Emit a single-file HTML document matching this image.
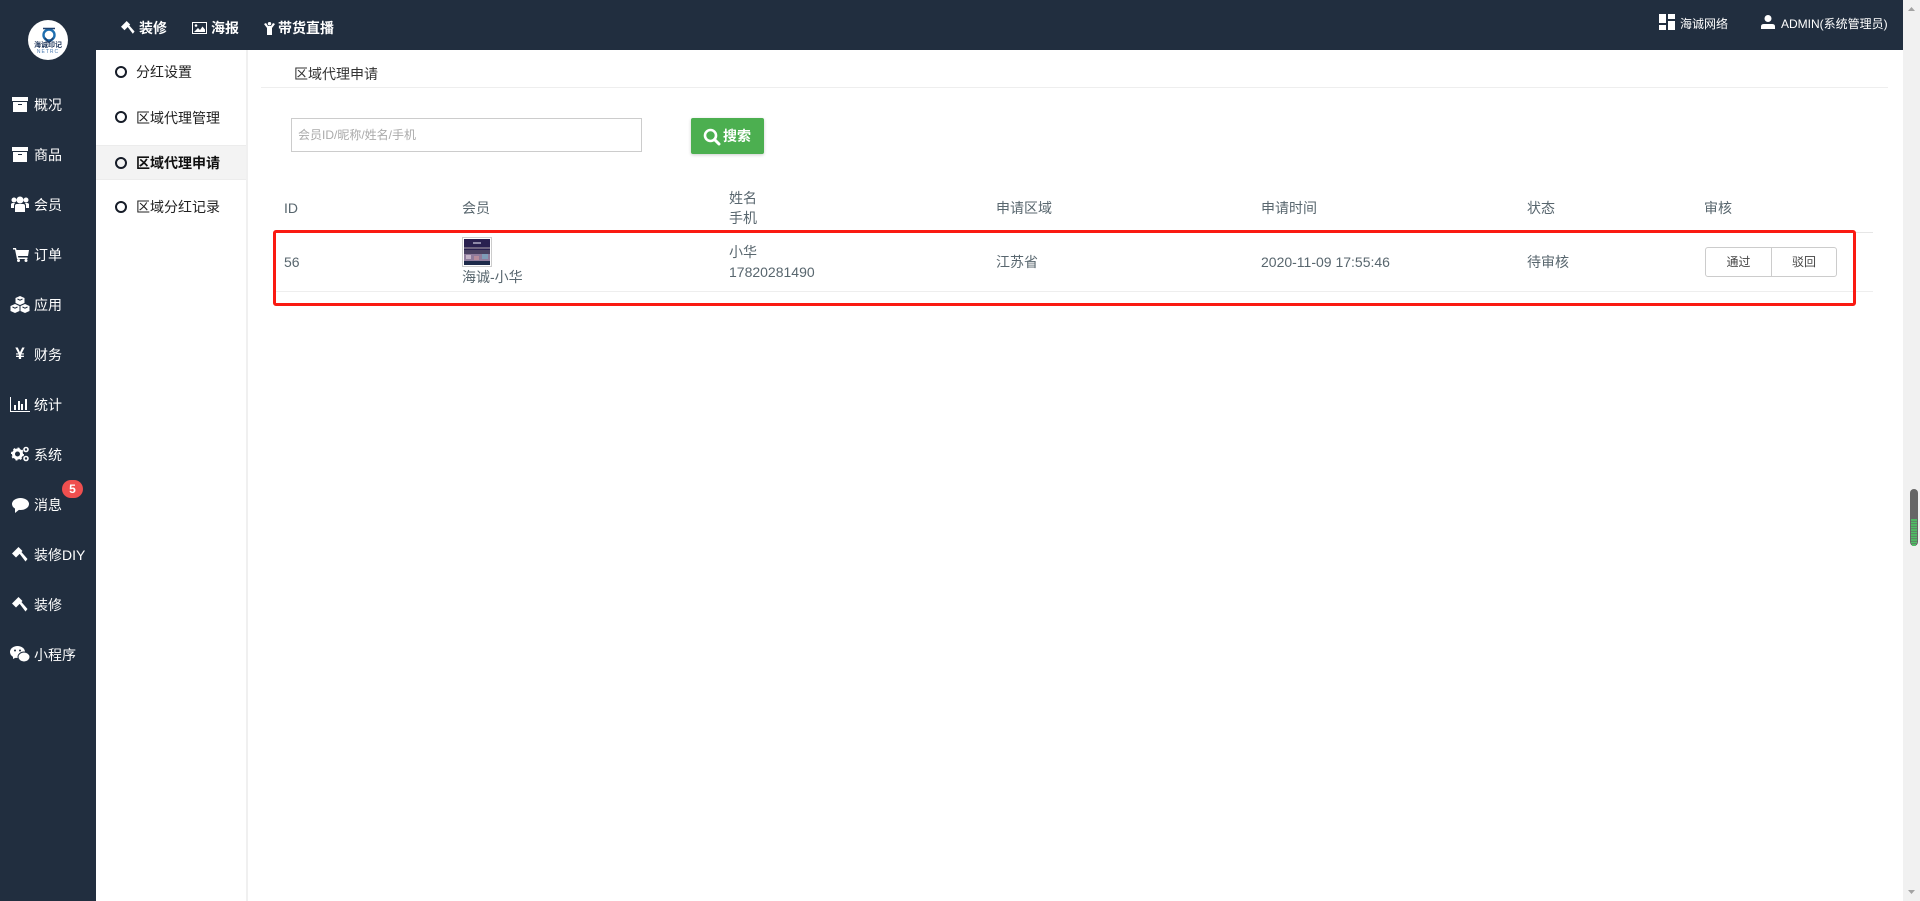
<!DOCTYPE html>
<html lang="zh-CN"><head><meta charset="utf-8"><title>区域代理申请</title>
<style>
*{box-sizing:border-box}
html,body{margin:0;padding:0;width:1920px;height:901px;overflow:hidden;background:#fff;font-family:"Liberation Sans","Noto Sans CJK SC",sans-serif;font-size:14px}
.a{position:absolute;white-space:nowrap;line-height:20px}
svg{position:absolute;display:block}
.s{color:#fff;left:34px;font-size:14px}
.t{color:#fff;font-weight:700;font-size:14px}
.n{color:#222;font-size:14px}
.c{position:absolute;left:115px;width:12px;height:12px;border:2px solid #161c28;border-radius:50%}
.h,.d{color:#58666e;font-size:14px}
</style></head><body>
<div class="a" style="left:0;top:0;width:96px;height:901px;background:#212e3f"></div>
<div class="a" style="left:96px;top:0;width:1807px;height:50px;background:#212e3f"></div>
<div class="a" style="left:246px;top:50px;width:2px;height:851px;background:#f0f0f0"></div>

<!-- logo -->
<div class="a" style="left:28px;top:20px;width:40px;height:40px;border-radius:50%;background:#fff"></div>
<svg style="left:41px;top:27px" width="16" height="16" viewBox="0 0 16 16"><circle cx="8" cy="8" r="5.500" fill="none" stroke="#1f6fb0" stroke-width="2.400"/><path d="M2 1.500H14M8 15.500L4 11M8 15.500L12 11" stroke="#1f3f6b" stroke-width="1.600" fill="none"/></svg>
<div class="a" style="left:33px;top:42px;width:30px;font-size:7px;line-height:8px;color:#22395e;font-weight:700;text-align:center">海诚印记</div>
<div class="a" style="left:33px;top:50px;width:30px;font-size:5px;line-height:5px;color:#4a7ab0;text-align:center;letter-spacing:1px">NETRC</div>

<!-- sidebar icons -->
<svg style="left:12px;top:97px" width="16" height="15" viewBox="0 0 16 15"><path d="M0 0H16V4H0ZM1 5H15V15H1ZM6 7V8H10V7Z" fill="#fff" fill-rule="evenodd"/></svg>
<svg style="left:12px;top:147px" width="16" height="15" viewBox="0 0 16 15"><path d="M0 0H16V4H0ZM1 5H15V15H1ZM6 7V8H10V7Z" fill="#fff" fill-rule="evenodd"/></svg>
<svg style="left:11px;top:196px" width="18" height="17" viewBox="0 0 18 17" fill="#fff"><circle cx="9" cy="4" r="3.500"/><circle cx="3" cy="4" r="2.500"/><circle cx="15" cy="4" r="2.500"/><path d="M4 16V10Q4 8 6 8H12Q14 8 14 10V16Z"/><path d="M0 12V8.500Q0 7 2 7H4Q3 8 3 10V12ZM18 12V8.500Q18 7 16 7H14Q15 8 15 10V12Z"/></svg>
<svg style="left:13px;top:248px" width="16" height="14" viewBox="0 0 16 14" fill="#fff"><path d="M0 0H3L3.500 2H16L15 8H5L5.300 9.500H14.500V11H4L2 1.500H0Z"/><circle cx="5.500" cy="12.500" r="1.500"/><circle cx="13" cy="12.500" r="1.500"/></svg>
<svg style="left:10px;top:296px" width="20" height="17" viewBox="0 0 20 17" fill="#fff"><path d="M10 0L14.500 2V7L10 9 5.500 7V2Z"/><path d="M5 8L9.500 10V15L5 17 .5 15V10Z"/><path d="M15 8L19.500 10V15L15 17 10.500 15V10Z"/><path d="M7.500 3L10 4.200 12.500 3M2.500 11L5 12.200 7.500 11M12.500 11L15 12.200 17.500 11" stroke="#212e3f" fill="none"/></svg>
<div class="a" style="left:13px;top:342px;width:14px;color:#fff;font-size:17px;font-weight:700;text-align:center;line-height:24px;font-family:'Liberation Sans',sans-serif">¥</div>
<svg style="left:10px;top:397px" width="20" height="15" viewBox="0 0 20 15"><path d="M.5 0V14.500H20" fill="none" stroke="#fff"/><path d="M4 8H6V13H4ZM8 4H10V13H8ZM11 7H13V13H11ZM15 2H17V13H15Z" fill="#fff"/></svg>
<svg style="left:11px;top:446px" width="19" height="16" viewBox="0 0 19 16" fill="#fff"><circle cx="6.500" cy="8" r="4" fill="none" stroke="#fff" stroke-width="3"/><circle cx="6.500" cy="8" r="5.500" fill="none" stroke="#fff" stroke-width="2" stroke-dasharray="2 2.300"/><circle cx="15" cy="3.500" r="2" fill="none" stroke="#fff" stroke-width="1.600"/><circle cx="15" cy="12.500" r="2" fill="none" stroke="#fff" stroke-width="1.600"/></svg>
<svg style="left:12px;top:498px" width="17" height="15" viewBox="0 0 17 15"><ellipse cx="8.500" cy="6" rx="8.500" ry="6" fill="#fff"/><path d="M3 10L3 15 8 11Z" fill="#fff"/></svg>
<svg style="left:12px;top:547px" width="16" height="16" viewBox="0 0 16 16" fill="#fff"><path d="M0 6.500L6.500 0 10.500 4 4 10.500Z"/><path d="M7 6L9 4.500 15.500 12 13.500 14.500Z"/></svg>
<svg style="left:12px;top:597px" width="16" height="16" viewBox="0 0 16 16" fill="#fff"><path d="M0 6.500L6.500 0 10.500 4 4 10.500Z"/><path d="M7 6L9 4.500 15.500 12 13.500 14.500Z"/></svg>
<svg style="left:10px;top:646px" width="20" height="17" viewBox="0 0 20 17" fill="#fff"><ellipse cx="7.500" cy="6" rx="7.500" ry="6"/><path d="M3 9V13L7 11Z"/><ellipse cx="14" cy="11" rx="6" ry="5" stroke="#212e3f"/><circle cx="5" cy="4.500" r="1" fill="#212e3f"/><circle cx="10" cy="4.500" r="1" fill="#212e3f"/></svg>

<div class="a s" style="top:95px">概况</div>
<div class="a s" style="top:145px">商品</div>
<div class="a s" style="top:195px">会员</div>
<div class="a s" style="top:245px">订单</div>
<div class="a s" style="top:295px">应用</div>
<div class="a s" style="top:345px">财务</div>
<div class="a s" style="top:395px">统计</div>
<div class="a s" style="top:445px">系统</div>
<div class="a s" style="top:495px">消息</div>
<div class="a s" style="top:545px">装修DIY</div>
<div class="a s" style="top:595px">装修</div>
<div class="a s" style="top:645px">小程序</div>
<div class="a" style="left:62px;top:480px;width:21px;height:18px;border-radius:9px;background:#ef4f4f;color:#fff;font-size:12px;font-weight:700;text-align:center;line-height:18px">5</div>

<!-- top nav -->
<svg style="left:121px;top:21px" width="14" height="14" viewBox="0 0 16 16" fill="#fff"><path d="M0 6.500L6.500 0 10.500 4 4 10.500Z"/><path d="M7 6L9 4.500 15.500 12 13.500 14.500Z"/></svg>
<div class="a t" style="left:139px;top:18px">装修</div>
<svg style="left:192px;top:22px" width="15" height="12" viewBox="0 0 15 12"><rect x=".5" y=".5" width="14" height="11" fill="none" stroke="#fff"/><circle cx="4" cy="3.500" r="1.300" fill="#fff"/><path d="M2 10L6 6 8 8 10.500 4.500 13 7.500V10Z" fill="#fff"/></svg>
<div class="a t" style="left:211px;top:18px">海报</div>
<svg style="left:264px;top:22px" width="11" height="13" viewBox="0 0 11 13" fill="#fff"><circle cx="5.500" cy="1.700" r="1.700"/><path d="M0 2L2 1 4 4H7L9 1 11 2 8 6V13H3V6Z"/></svg>
<div class="a t" style="left:278px;top:18px">带货直播</div>
<svg style="left:1659px;top:14px" width="16" height="16" viewBox="0 0 16 16" fill="#fff"><path d="M0 0H7V9H0ZM9 0H16V5H9ZM9 7H16V16H9ZM0 11H7V16H0Z"/></svg>
<div class="a" style="left:1680px;top:14px;color:#fff;font-size:12px">海诚网络</div>
<svg style="left:1761px;top:15px" width="14" height="14" viewBox="0 0 14 14" fill="#fff"><circle cx="7" cy="3.500" r="3.500"/><path d="M0 14V11.500Q0 9 3 9H11Q14 9 14 11.500V14Z"/></svg>
<div class="a" style="left:1781px;top:14px;color:#fff;font-size:12px">ADMIN(系统管理员)</div>

<!-- sub nav -->
<div class="a" style="left:96px;top:145px;width:150px;height:35px;background:#f3f3f3;border-top:1px solid #ececec;border-bottom:1px solid #ececec"></div>
<div class="c" style="top:66px"></div><div class="a n" style="left:136px;top:62px">分红设置</div>
<div class="c" style="top:111px"></div><div class="a n" style="left:136px;top:108px">区域代理管理</div>
<div class="c" style="top:157px"></div><div class="a n" style="left:136px;top:153px;font-weight:700;color:#111">区域代理申请</div>
<div class="c" style="top:201px"></div><div class="a n" style="left:136px;top:197px">区域分红记录</div>

<!-- content -->
<div class="a" style="left:294px;top:64px;color:#333">区域代理申请</div>
<div class="a" style="left:261px;top:87px;width:1627px;height:1px;background:#eee"></div>
<div class="a" style="left:291px;top:118px;width:351px;height:34px;border:1px solid #ccc"></div>
<div class="a" style="left:298px;top:125px;color:#aaa;font-size:12px">会员ID/昵称/姓名/手机</div>
<div class="a" style="left:691px;top:118px;width:73px;height:36px;background:#4caf50;border-radius:2px;box-shadow:0 1px 3px rgba(0,0,0,.2)"></div>
<svg style="left:703px;top:128px" width="18" height="18" viewBox="0 0 18 18"><circle cx="7.500" cy="7.500" r="5.500" fill="none" stroke="#fff" stroke-width="2.600"/><path d="M11.500 11.500L16 16" stroke="#fff" stroke-width="3" stroke-linecap="round"/></svg>
<div class="a" style="left:723px;top:126px;color:#fff;font-size:14px;font-weight:700">搜索</div>

<div class="a h" style="left:284px;top:198px">ID</div>
<div class="a h" style="left:462px;top:198px">会员</div>
<div class="a h" style="left:729px;top:188px">姓名</div>
<div class="a h" style="left:729px;top:208px">手机</div>
<div class="a h" style="left:996px;top:198px">申请区域</div>
<div class="a h" style="left:1261px;top:198px">申请时间</div>
<div class="a h" style="left:1527px;top:198px">状态</div>
<div class="a h" style="left:1704px;top:198px">审核</div>
<div class="a" style="left:275px;top:232px;width:1598px;height:1px;background:#e6e6e6"></div>
<div class="a" style="left:275px;top:291px;width:1598px;height:1px;background:#eee"></div>

<div class="a d" style="left:284px;top:252px">56</div>
<div class="a" style="left:462px;top:237px;width:30px;height:30px;border:1px solid #ccc;background:#fff"></div>
<svg style="left:464px;top:239px" width="26" height="26" viewBox="0 0 26 26"><rect width="26" height="26" fill="#2a2150"/><rect x="9" y="3" width="8" height="2" fill="#8f8aa8"/><rect y="8" width="26" height="2" fill="#6e6480"/><rect y="11" width="26" height="4" fill="#4a4262"/><rect y="15" width="26" height="7" fill="#8f7c9c"/><rect x="2" y="16" width="5" height="4" fill="#c4b4c8"/><rect x="10" y="17" width="5" height="4" fill="#b68c9c"/><rect x="18" y="15" width="6" height="5" fill="#7f9cb8"/><rect y="22" width="26" height="4" fill="#1d2a4a"/></svg>
<div class="a d" style="left:462px;top:267px">海诚-小华</div>
<div class="a d" style="left:729px;top:242px">小华</div>
<div class="a d" style="left:729px;top:262px">17820281490</div>
<div class="a d" style="left:996px;top:252px">江苏省</div>
<div class="a d" style="left:1261px;top:252px">2020-11-09 17:55:46</div>
<div class="a d" style="left:1527px;top:252px">待审核</div>
<div class="a" style="left:1705px;top:247px;width:67px;height:30px;border:1px solid #ccc;border-radius:3px 0 0 3px;text-align:center;line-height:28px;font-size:12px;color:#444">通过</div>
<div class="a" style="left:1771px;top:247px;width:66px;height:30px;border:1px solid #ccc;border-radius:0 3px 3px 0;text-align:center;line-height:28px;font-size:12px;color:#444">驳回</div>

<!-- red highlight -->
<div class="a" style="left:273px;top:230px;width:1583px;height:76px;border:3px solid #fa1a12;border-radius:3px"></div>

<!-- scrollbar -->
<div class="a" style="left:1903px;top:0;width:17px;height:901px;background:#f1f1f1"></div>
<svg style="left:1903px;top:0" width="17" height="901" viewBox="0 0 17 901"><path d="M5 11L8.500 7 12 11Z" fill="#a3a3a3"/><path d="M5 890L8.500 894 12 890Z" fill="#a3a3a3"/><rect x="7" y="489" width="8" height="57" rx="4" fill="#666"/><path d="M8 520H14M8 522.500H14M8 525H14M8 527.500H14M8 530H14M8 532.500H14M8 535H14M8 537.500H14M8 540H14M8 542.500H14M9 545H13" stroke="#4cc264" stroke-width="1.700"/></svg>
</body></html>
